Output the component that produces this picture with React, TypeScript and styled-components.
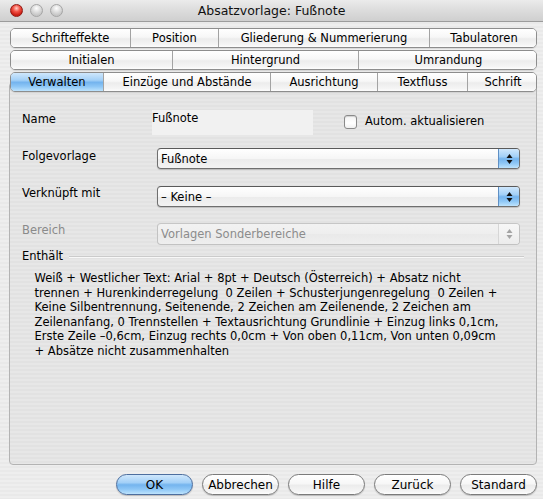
import styled, { createGlobalStyle, css } from 'styled-components';

const GlobalStyle = createGlobalStyle`
  html, body {
    margin: 0;
    padding: 0;
    background: #ececec;
  }
  body {
    font-family: 'DejaVu Sans', 'Liberation Sans', sans-serif;
    font-size: 11.5px;
    color: #000;
  }
`;

const stripes = (a: string, b: string) => css`
  background: repeating-linear-gradient(to bottom, ${a} 0px, ${a} 2px, ${b} 2px, ${b} 4px);
`;

const aquaBlue = css`
  background: linear-gradient(to bottom, #cfe7fc 0%, #a3d0f7 40%, #74b4ee 52%, #8ec7f6 75%, #bde3fd 100%);
`;

const aquaWhite = css`
  background: linear-gradient(to bottom, #ffffff 0%, #f7f7f7 45%, #ececec 55%, #f4f4f4 85%, #fdfdfd 100%);
`;

const Window = styled.div`
  width: 543px;
  height: 499px;
  overflow: hidden;
  display: flex;
  flex-direction: column;
  ${stripes('#eeeeee', '#e9e9e9')}
`;

const TitleBar = styled.div`
  height: 21px;
  display: grid;
  grid-template-columns: 1fr auto 1fr;
  align-items: center;
  background: linear-gradient(to bottom, #ebebeb 0%, #dcdcdc 50%, #cfcfcf 100%);
  border-bottom: 1px solid #9c9c9c;
`;

const Lights = styled.div`
  display: flex;
  gap: 7px;
  padding-left: 10px;
`;

const Light = styled.span<{ $red?: boolean }>`
  width: 13px;
  height: 13px;
  border-radius: 50%;
  box-sizing: border-box;
  ${({ $red }) =>
    $red
      ? css`
          border: 1px solid #8f1a14;
          background: radial-gradient(circle at 50% 30%, #ffd1c9 0%, #f4564a 35%, #c8190f 75%, #f37066 100%);
        `
      : css`
          border: 1px solid #a5a5a5;
          background: radial-gradient(circle at 50% 30%, #ffffff 0%, #dedede 40%, #c4c4c4 75%, #e6e6e6 100%);
        `}
`;

const Title = styled.div`
  font-size: 12.5px;
  color: #111;
  white-space: nowrap;
`;

const Body = styled.div`
  display: flex;
  flex-direction: column;
  padding: 0 6px 0 9px;
`;

const Tabs = styled.div`
  position: relative;
  z-index: 1;
  display: flex;
  flex-direction: column;
  padding: 6px 0 0 1px;
  gap: 1px;
`;

const TabRow = styled.div`
  display: flex;
  height: 20px;
  box-sizing: border-box;
  border: 1px solid #8d8d8d;
  border-radius: 5px;
  overflow: hidden;
  box-shadow: 0 1px 0 rgba(0, 0, 0, 0.08);
  & + & {
    margin-top: 1px;
  }
`;

const Tab = styled.div<{ $w: number; $active?: boolean }>`
  flex: 0 0 ${({ $w }) => $w}px;
  box-sizing: border-box;
  text-align: center;
  line-height: 18px;
  white-space: nowrap;
  ${({ $active }) => ($active ? aquaBlue : aquaWhite)}
  & + & {
    border-left: 1px solid #a3a3a3;
  }
`;

const Panel = styled.div`
  margin-top: -10px;
  height: 383px;
  box-sizing: border-box;
  border: 1px solid #b3b3b3;
  border-radius: 4px;
  ${stripes('#e7e7e7', '#e2e2e2')}
  padding: 27px 16px 0 12px;
  display: flex;
  flex-direction: column;
`;

const Row = styled.div<{ $mt?: number }>`
  display: flex;
  align-items: flex-start;
  margin-top: ${({ $mt }) => $mt ?? 0}px;
`;

const Label = styled.div<{ $pt?: number; $disabled?: boolean }>`
  flex: 0 0 130px;
  line-height: 15px;
  padding-top: ${({ $pt }) => $pt ?? 0}px;
  color: ${({ $disabled }) => ($disabled ? '#8a8a8a' : '#000')};
`;

const NameField = styled.div`
  width: 161px;
  height: 25px;
  box-sizing: border-box;
  padding-top: 1px;
  line-height: 15px;
  background: #f1f1f1;
`;

const CheckWrap = styled.label`
  display: flex;
  align-items: flex-start;
  margin-left: 31px;
  gap: 8px;
`;

const CheckBox = styled.span`
  margin-top: 5px;
  width: 13px;
  height: 14px;
  box-sizing: border-box;
  border: 1px solid #8a8a8a;
  border-radius: 3px;
  background: linear-gradient(to bottom, #f4f4f4 0%, #ffffff 60%, #f0f0f0 100%);
  box-shadow: inset 0 1px 1px rgba(0, 0, 0, 0.15);
`;

const CheckText = styled.span`
  padding-top: 4px;
  line-height: 15px;
`;

const Select = styled.div<{ $disabled?: boolean; $h?: number }>`
  flex: 1;
  margin-left: 5px;
  height: ${({ $h }) => $h ?? 21}px;
  box-sizing: border-box;
  display: flex;
  border-radius: 4px;
  overflow: hidden;
  border: 1px solid ${({ $disabled }) => ($disabled ? '#c2c2c2' : '#6f6f6f')};
  border-top-color: ${({ $disabled }) => ($disabled ? '#c6c6c6' : '#5a5a5a')};
  background: linear-gradient(to bottom, #ffffff 0%, #f6f6f6 50%, #ebebeb 51%, #f3f3f3 100%);
  box-shadow: ${({ $disabled }) => ($disabled ? 'none' : '0 1px 1px rgba(0,0,0,0.18)')};
  color: ${({ $disabled }) => ($disabled ? '#8c8c8c' : '#000')};
  ${({ $disabled }) =>
    $disabled &&
    css`
      background: linear-gradient(to bottom, #f2f2f2 0%, #eeeeee 50%, #e9e9e9 51%, #eeeeee 100%);
    `}
`;

const SelectText = styled.div`
  flex: 1;
  padding-left: 3px;
  display: flex;
  align-items: center;
  white-space: nowrap;
`;

const SelectArrows = styled.div<{ $disabled?: boolean }>`
  flex: 0 0 20px;
  display: flex;
  align-items: center;
  justify-content: center;
  ${({ $disabled }) =>
    $disabled
      ? css`
          border-left: 1px solid #d6d6d6;
          background: linear-gradient(to bottom, #f7f7f7, #ececec);
        `
      : css`
          border-left: 1px solid #5f8fc4;
          ${aquaBlue}
        `}
`;

const Section = styled.div`
  margin-top: 4px;
  display: flex;
  align-items: center;
  line-height: 15px;
  margin-right: -4px;
  &::after {
    content: '';
    flex: 1;
    margin-left: 6px;
    height: 1px;
    background: #cbcbcb;
    box-shadow: 0 1px 0 #f8f8f8;
  }
`;

const Description = styled.div`
  margin-top: 7px;
  padding-left: 12.5px;
  line-height: 14.5px;
  white-space: pre;
`;

const Buttons = styled.div`
  margin-top: 9px;
  display: flex;
  justify-content: flex-end;
  gap: 9px;
`;

const Button = styled.div<{ $primary?: boolean }>`
  width: 77px;
  height: 21px;
  box-sizing: border-box;
  border-radius: 11px;
  border: 1px solid ${({ $primary }) => ($primary ? '#4d6e9e' : '#7b7b7b')};
  display: flex;
  align-items: center;
  justify-content: center;
  font-size: 12px;
  box-shadow: 0 1px 1px rgba(0, 0, 0, 0.2);
  ${({ $primary }) => ($primary ? aquaBlue : aquaWhite)}
`;

function Arrows({ disabled }: { disabled?: boolean }) {
  const fill = disabled ? '#a4a4a4' : '#111';
  return (
    <svg width="7" height="12" viewBox="0 0 7 12">
      <polygon points="3.5,1 6.5,5 0.5,5" fill={fill} />
      <polygon points="0.5,7 6.5,7 3.5,11" fill={fill} />
    </svg>
  );
}

function Dropdown({ value, disabled, h }: { value: string; disabled?: boolean; h?: number }) {
  return (
    <Select $disabled={disabled} $h={h}>
      <SelectText>{value}</SelectText>
      <SelectArrows $disabled={disabled}>
        <Arrows disabled={disabled} />
      </SelectArrows>
    </Select>
  );
}

const tabRows: { label: string; w: number; active?: boolean }[][] = [
  [
    { label: 'Schrifteffekte', w: 119 },
    { label: 'Position', w: 88 },
    { label: 'Gliederung & Nummerierung', w: 211 },
    { label: 'Tabulatoren', w: 109 },
  ],
  [
    { label: 'Initialen', w: 161 },
    { label: 'Hintergrund', w: 186 },
    { label: 'Umrandung', w: 180 },
  ],
  [
    { label: 'Verwalten', w: 92, active: true },
    { label: 'Einzüge und Abstände', w: 167 },
    { label: 'Ausrichtung', w: 107 },
    { label: 'Textfluss', w: 90 },
    { label: 'Schrift', w: 71 },
  ],
];

const description = [
  'Weiß + Westlicher Text: Arial + 8pt + Deutsch (Österreich) + Absatz nicht',
  'trennen + Hurenkinderregelung  0 Zeilen + Schusterjungenregelung  0 Zeilen +',
  'Keine Silbentrennung, Seitenende, 2 Zeichen am Zeilenende, 2 Zeichen am',
  'Zeilenanfang, 0 Trennstellen + Textausrichtung Grundlinie + Einzug links 0,1cm,',
  'Erste Zeile –0,6cm, Einzug rechts 0,0cm + Von oben 0,11cm, Von unten 0,09cm',
  '+ Absätze nicht zusammenhalten',
].join('\n');

export default function App() {
  return (
    <>
      <GlobalStyle />
      <Window>
        <TitleBar>
          <Lights>
            <Light $red />
            <Light />
            <Light />
          </Lights>
          <Title>Absatzvorlage: Fußnote</Title>
          <div />
        </TitleBar>
        <Body>
          <Tabs>
            {tabRows.map((row, i) => (
              <TabRow key={i}>
                {row.map((t) => (
                  <Tab key={t.label} $w={t.w} $active={t.active}>
                    {t.label}
                  </Tab>
                ))}
              </TabRow>
            ))}
          </Tabs>
          <Panel>
            <Row>
              <Label $pt={2}>Name</Label>
              <NameField>Fußnote</NameField>
              <CheckWrap>
                <CheckBox />
                <CheckText>Autom. aktualisieren</CheckText>
              </CheckWrap>
            </Row>
            <Row $mt={13}>
              <Label $pt={1}>Folgevorlage</Label>
              <Dropdown value="Fußnote" />
            </Row>
            <Row $mt={17}>
              <Label>Verknüpft mit</Label>
              <Dropdown value="– Keine –" />
            </Row>
            <Row $mt={16}>
              <Label $disabled>Bereich</Label>
              <Dropdown value="Vorlagen Sonderbereiche" disabled h={22} />
            </Row>
            <Section>Enthält</Section>
            <Description>{description}</Description>
          </Panel>
          <Buttons>
            <Button $primary>OK</Button>
            <Button>Abbrechen</Button>
            <Button>Hilfe</Button>
            <Button>Zurück</Button>
            <Button>Standard</Button>
          </Buttons>
        </Body>
      </Window>
    </>
  );
}
